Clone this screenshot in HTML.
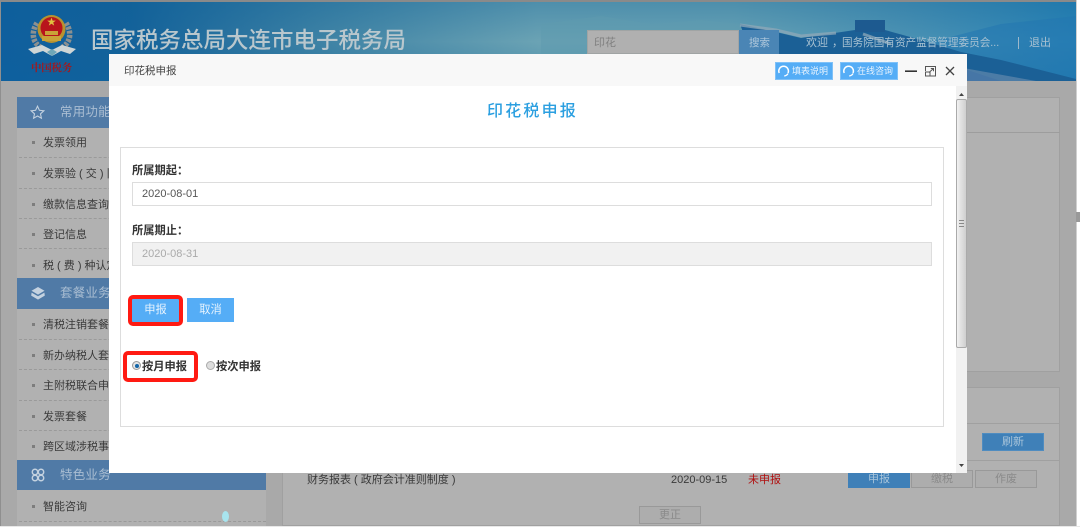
<!DOCTYPE html>
<html lang="zh">
<head>
<meta charset="utf-8">
<title>印花税申报</title>
<style>
html,body{margin:0;padding:0;width:1080px;height:527px;overflow:hidden;background:#fff}
body{position:relative;font-family:"Liberation Sans","Noto Sans CJK SC",sans-serif;font-size:11px;color:#333;filter:blur(.3px)}
div,span{position:absolute;white-space:nowrap;box-sizing:border-box}
.side{left:17px;width:249px;height:31px;background:#507aa6;color:#a9bdd2;font-size:12.5px;line-height:31px;padding-left:43px;letter-spacing:.2px}
.item{left:43px;font-size:11px;line-height:14px;color:#3a3a3a}
.dot{left:32px;width:3px;height:3px;background:#7d7d7d}
.dash{left:19px;width:247px;height:0;border-top:1px dashed #9a9a9a}
.btn{text-align:center;font-size:11px}
.gb{border:1px solid #999;color:#8a8a8a;background:#adadad;height:18px;line-height:17px;width:62px}
.tb{top:62px;height:18px;width:58px;background:#55adf6;border:1px solid #7fc1f8;color:#e9f4fe;font-size:9px;line-height:17px;padding-left:16px;text-align:left}
.tb svg{position:absolute;left:2px;top:1px}
.label{left:132px;font-size:11.25px;font-weight:bold;color:#333;line-height:14px}
.input{left:132px;width:800px;height:24px;border:1px solid #ddd;font-size:11px;line-height:22px;padding-left:9px}
.blue{top:298px;height:24px;background:#55adf6;color:#e6f3fe;font-size:11.25px;line-height:25px;text-align:center}
.red{border:4px solid #ff1a12;border-radius:5px}
.radio{width:9px;height:9px;border-radius:50%;border:1px solid #aaa;background:#ddd}
</style>
</head>
<body>
<!-- page background -->
<div style="left:0;top:0;width:1076px;height:526px;background:#a9a9a9;border-top:2px solid #8a8a8a;border-left:1px solid #8f8f8f"></div>

<!-- header -->
<svg style="position:absolute;left:1px;top:2px" width="1075" height="79" viewBox="0 0 1075 79">
  <defs>
    <linearGradient id="hg" x1="0" y1="0" x2="1" y2="0">
      <stop offset="0" stop-color="#0f5f9e"/>
      <stop offset=".12" stop-color="#14629a"/>
      <stop offset=".3" stop-color="#3f83a5"/>
      <stop offset=".5" stop-color="#6ba3b4"/>
      <stop offset=".68" stop-color="#69a3b5"/>
      <stop offset=".85" stop-color="#4a92b4"/>
      <stop offset="1" stop-color="#2a84b6"/>
    </linearGradient>
    <linearGradient id="hv" x1="0" y1="0" x2="0" y2="1">
      <stop offset="0" stop-color="#0b5f97" stop-opacity=".3"/>
      <stop offset=".5" stop-color="#0b5f97" stop-opacity="0"/>
      <stop offset="1" stop-color="#0a63a0" stop-opacity=".3"/>
    </linearGradient>
  </defs>
  <rect width="1075" height="79" fill="url(#hg)"/>
  <rect width="1075" height="79" fill="url(#hv)"/>
  <path d="M540 22L600 14L650 22L700 18L760 24L760 79L540 79Z" fill="#5f9aae" opacity=".55"/>
  <path d="M930 40L1000 22L1075 14L1075 79L960 79Z" fill="#2277b0" opacity=".55"/>
  <path d="M739 22L775 30L800 36L854 28L854 18L884 18L884 28L920 38L960 50L1000 58L1075 77L1075 79L760 79Z" fill="#1b6096"/>
  <path d="M739 23L775 28L800 34L835 31M862 32L890 42" stroke="#8fa8b8" stroke-width="3" fill="none" opacity=".75"/>
  <path d="M900 52L960 66L1000 79L880 79Z" fill="#0f5596"/>
  <path d="M940 62L1035 79L930 79Z" fill="#7d98b6" opacity=".5"/>
  <path d="M854 18H884V30H854Z" fill="#1d5a90"/>
  <!-- emblem -->
  <path d="M36 21C30 30 31 41 41 46M65 21C71 30 70 41 60 46" stroke="#8c9090" stroke-width="5.5" fill="none" stroke-dasharray="3 1.2"/>
  <path d="M27 47L41 43L51 48L61 43L75 47L69 52L60 49L51 54L42 49L33 52Z" fill="#cfd6d6"/>
  <path d="M46 50L51 54L56 50L51 47Z" fill="#6ea7b8"/>
  <circle cx="50.5" cy="27" r="14" fill="#b8922f"/>
  <circle cx="50.5" cy="26" r="11" fill="#b8141c"/>
  <path d="M41 34H60V39H41ZM44 29H57V33H44Z" fill="#c9a238"/>
  <path d="M50.5 15.5l1.1 3.1h3.2l-2.6 1.9 1 3.1-2.7-1.9-2.7 1.9 1-3.1-2.6-1.9h3.2z" fill="#e0c040"/>
</svg>
<div style="left:31px;top:61px;font-family:'Noto Serif CJK SC','Liberation Serif',serif;font-size:10.5px;line-height:14px;color:#a01a20;font-weight:bold;letter-spacing:-.3px">中国税务</div>
<div style="left:91px;top:27px;font-size:22.5px;line-height:28px;font-weight:500;color:#b9c7cd">国家税务总局大连市电子税务局</div>
<div style="left:587px;top:30px;width:152px;height:24px;background:#b0b0b0;border:1px solid #a0a4a4;color:#808080;font-size:11px;line-height:24px;padding-left:6px">印花</div>
<div style="left:739px;top:30px;width:40px;height:24px;background:#4a85b5;color:#b0c8dc;font-size:10.5px;line-height:27px;padding-left:10px">搜索</div>
<div style="left:806px;top:36px;color:#a9c2d2;font-size:11px;line-height:14px">欢迎</div>
<div style="left:832px;top:36px;color:#a9c2d2;font-size:11px;line-height:14px">，</div>
<div style="left:842px;top:36px;color:#a9c2d2;font-size:10.6px;line-height:14px">国务院国有资产监督管理委员会...</div>
<div style="left:1018px;top:37px;width:1px;height:12px;background:#9db8cb"></div>
<div style="left:1029px;top:36px;color:#a9c2d2;font-size:11px;line-height:14px">退出</div>

<!-- sidebar -->
<div style="left:17px;top:97px;width:249px;height:429px;background:#b1b1b1"></div>
<div class="side" style="top:97px">常用功能</div>
<svg style="position:absolute;left:30px;top:105px" width="15" height="15" viewBox="0 0 15 15"><path d="M7.5 1.2l1.9 4.1 4.4.5-3.3 3 .9 4.4-3.9-2.2-3.9 2.2.9-4.4-3.3-3 4.4-.5z" fill="none" stroke="#c4d2e0" stroke-width="1.1"/></svg>
<div class="dot" style="top:141px"></div><div class="item" style="top:136px">发票领用</div>
<div class="dash" style="top:157px"></div>
<div class="dot" style="top:172px"></div><div class="item" style="top:167px">发票验 ( 交 ) 旧</div>
<div class="dash" style="top:188px"></div>
<div class="dot" style="top:203px"></div><div class="item" style="top:198px">缴款信息查询</div>
<div class="dash" style="top:218px"></div>
<div class="dot" style="top:233px"></div><div class="item" style="top:228px">登记信息</div>
<div class="dash" style="top:248px"></div>
<div class="dot" style="top:264px"></div><div class="item" style="top:259px">税 ( 费 ) 种认定</div>

<div class="side" style="top:278px">套餐业务</div>
<svg style="position:absolute;left:31px;top:286px" width="14" height="15" viewBox="0 0 14 15"><path d="M7 1L13.5 4.8 7 8.6 .5 4.8Z" fill="#c4d2e0"/><path d="M.6 6.6L7 10.2l6.4-3.6.4 3L7 13.6.2 9.6Z" fill="#c4d2e0"/></svg>
<div class="dot" style="top:323px"></div><div class="item" style="top:318px">清税注销套餐</div>
<div class="dash" style="top:339px"></div>
<div class="dot" style="top:354px"></div><div class="item" style="top:349px">新办纳税人套餐</div>
<div class="dash" style="top:369px"></div>
<div class="dot" style="top:384px"></div><div class="item" style="top:379px">主附税联合申报</div>
<div class="dash" style="top:400px"></div>
<div class="dot" style="top:415px"></div><div class="item" style="top:410px">发票套餐</div>
<div class="dash" style="top:430px"></div>
<div class="dot" style="top:445px"></div><div class="item" style="top:440px">跨区域涉税事项</div>

<div class="side" style="top:460px;height:30px">特色业务</div>
<svg style="position:absolute;left:31px;top:468px" width="14" height="14" viewBox="0 0 14 14" fill="none" stroke="#c4d2e0" stroke-width="1.5"><circle cx="4" cy="4" r="2.7"/><circle cx="10" cy="4" r="2.7"/><circle cx="4" cy="10" r="2.7"/><circle cx="10" cy="10" r="2.7"/></svg>
<div class="dot" style="top:505px"></div><div class="item" style="top:500px">智能咨询</div>
<div class="dash" style="top:521px"></div>
<div style="left:222px;top:511px;width:7px;height:11px;border-radius:50%;background:#a8e4ee"></div>

<!-- right panels -->
<div style="left:282px;top:97px;width:778px;height:275px;background:#b1b1b1;border:1px solid #a0a0a0"></div>
<div style="left:282px;top:132px;width:778px;height:1px;background:#9d9d9d"></div>
<div style="left:282px;top:387px;width:778px;height:139px;background:#b1b1b1;border:1px solid #a0a0a0"></div>
<div style="left:282px;top:423px;width:778px;height:1px;background:#a0a0a0"></div>
<div style="left:282px;top:460px;width:778px;height:1px;background:#a0a0a0"></div>
<div class="btn" style="left:982px;top:433px;width:62px;height:18px;background:#3f80b8;border:1px solid #4f8cc0;color:#a8c4da;line-height:17px">刷新</div>
<div style="left:307px;top:473px;font-size:11px;line-height:14px;color:#3a3a3a">财务报表 ( 政府会计准则制度 )</div>
<div style="left:671px;top:473px;font-size:11px;line-height:14px;color:#3a3a3a">2020-09-15</div>
<div style="left:748px;top:473px;font-size:11px;line-height:14px;color:#b01010">未申报</div>
<div class="btn" style="left:848px;top:470px;width:62px;height:18px;background:#3f80b8;color:#a8c4da;line-height:19px">申报</div>
<div class="btn gb" style="left:911px;top:470px">缴税</div>
<div class="btn gb" style="left:975px;top:470px">作废</div>
<div class="btn gb" style="left:639px;top:506px">更正</div>

<!-- right page strip -->
<div style="left:1076px;top:0;width:4px;height:527px;background:#fff;border-left:1px solid #d0d0d0"></div>
<div style="left:1076px;top:212px;width:4px;height:10px;background:#999"></div>
<div style="left:0;top:526px;width:1080px;height:1px;background:#e8e8e8"></div>

<!-- dialog -->
<div style="left:109px;top:54px;width:858px;height:419px;background:#fff;overflow:hidden">
  <div style="left:0;top:0;width:858px;height:32px;background:#f8f8f8"></div>
</div>
<div style="left:124px;top:64px;font-size:10.5px;line-height:14px;color:#444">印花税申报</div>
<div class="tb" style="left:775px"><svg width="13" height="14" viewBox="0 0 13 14" fill="none" stroke="#fff" stroke-width="1.5"><path d="M1.2 9A4.8 4.8 0 1 1 10 9"/><path d="M10 9.5Q9 11.6 6.2 12" stroke-width="1.3"/></svg>填表说明</div>
<div class="tb" style="left:840px"><svg width="13" height="14" viewBox="0 0 13 14" fill="none" stroke="#fff" stroke-width="1.5"><path d="M1.2 9A4.8 4.8 0 1 1 10 9"/><path d="M10 9.5Q9 11.6 6.2 12" stroke-width="1.3"/></svg>在线咨询</div>
<svg style="position:absolute;left:904px;top:63px" width="54" height="16" viewBox="0 0 54 16" fill="none" stroke="#555">
  <path d="M1 8.2H13" stroke-width="1.6" stroke="#333"/>
  <path d="M21.5 8V3.5H31.5V13H26.5" stroke-width="1"/>
  <path d="M21.5 9H26V13H21.5Z" stroke-width="1"/>
  <path d="M25 9.5L29.5 5.5M26.8 5.5H29.5V8.2" stroke-width="1"/>
  <path d="M42 4L50 12M50 4L42 12" stroke-width="1.3" stroke="#444"/>
</svg>

<div style="left:109px;top:102px;width:847px;text-align:center;font-size:16px;line-height:20px;letter-spacing:2.2px;color:#2b9fe0;font-weight:500">印花税申报</div>

<!-- form -->
<div style="left:120px;top:147px;width:824px;height:280px;border:1px solid #ddd"></div>
<div class="label" style="top:164px">所属期起：</div>
<div class="input" style="top:182px;color:#555">2020-08-01</div>
<div class="label" style="top:224px">所属期止：</div>
<div class="input" style="top:242px;background:#f1f1f1;color:#aaa">2020-08-31</div>

<div class="blue" style="left:132px;width:47px">申报</div>
<div class="red" style="left:128px;top:295px;width:55px;height:31px"></div>
<div class="blue" style="left:187px;width:47px">取消</div>

<div class="red" style="left:123px;top:351px;width:75px;height:31px"></div>
<div class="radio" style="left:132px;top:361px;border-color:#999;background:#e4e4e4"></div>
<div style="left:134.5px;top:363.5px;width:4px;height:4px;border-radius:50%;background:#1566a8"></div>
<div style="left:142px;top:360px;font-size:11.25px;font-weight:bold;line-height:14px;color:#333">按月申报</div>
<div class="radio" style="left:206px;top:361px"></div>
<div style="left:216px;top:360px;font-size:11.25px;font-weight:bold;line-height:14px;color:#333">按次申报</div>

<!-- dialog scrollbar -->
<div style="left:956px;top:86px;width:11px;height:387px;background:#f1f1f1"></div>
<svg style="position:absolute;left:956px;top:86px" width="11" height="387" viewBox="0 0 11 387">
  <path d="M3 10H8L5.5 7Z" fill="#444"/>
  <path d="M3 378H8L5.5 381Z" fill="#444"/>
</svg>
<div style="left:956px;top:99px;width:11px;height:249px;background:linear-gradient(90deg,#f2f2f2,#e2e2e2 40%,#cfcfcf);border:1px solid #aaa;border-radius:2px"></div>
<div style="left:959px;top:220px;width:5px;height:7px;border-top:1px solid #888;border-bottom:1px solid #888"></div>
<div style="left:959px;top:223px;width:5px;height:1px;background:#888"></div>
</body>
</html>
